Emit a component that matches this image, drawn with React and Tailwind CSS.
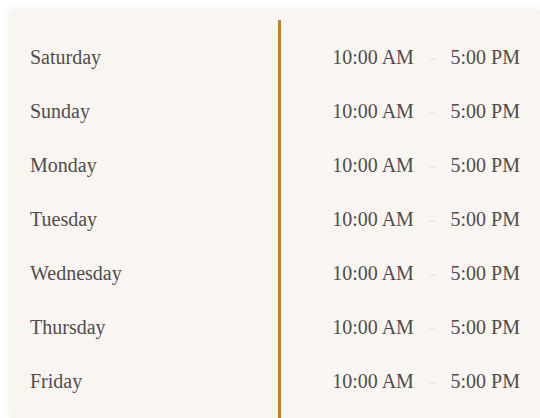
const hours = [
  { day: 'Saturday', open: '10:00 AM', close: '5:00 PM' },
  { day: 'Sunday', open: '10:00 AM', close: '5:00 PM' },
  { day: 'Monday', open: '10:00 AM', close: '5:00 PM' },
  { day: 'Tuesday', open: '10:00 AM', close: '5:00 PM' },
  { day: 'Wednesday', open: '10:00 AM', close: '5:00 PM' },
  { day: 'Thursday', open: '10:00 AM', close: '5:00 PM' },
  { day: 'Friday', open: '10:00 AM', close: '5:00 PM' }
];

export default function App() {
  return (
    <div className="h-[418px] overflow-hidden bg-white pt-[10px] pl-[10px]" style={{ fontFamily: '"Liberation Serif", "Times New Roman", serif' }}>
      <div className="w-[530px] bg-[#f9f6f2] pt-[10px] px-5 shadow-[0_0_10px_rgba(0,0,0,0.07)]">
        <div className="grid grid-cols-[248px_1fr]">
          {/* days */}
          <div className="pt-[10px] pb-[10px]">
            {hours.map(({ day }) => (
              <div key={day} className="h-[54px] flex items-center text-[20px] text-[#514c4a]">
                {day}
              </div>
            ))}
          </div>

          {/* times */}
          <div className="border-l-[3px] border-[#c3812f] pt-[10px] pb-[10px]">
            {hours.map(({ day, open, close }) => (
              <div key={day} className="h-[54px] flex items-center justify-end gap-[15px] text-[20px] text-[#514c4a]">
                <span>{open}</span>
                <span className="text-[#ece5dc]">-</span>
                <span>{close}</span>
              </div>
            ))}
          </div>
        </div>
      </div>
    </div>
  );
}
